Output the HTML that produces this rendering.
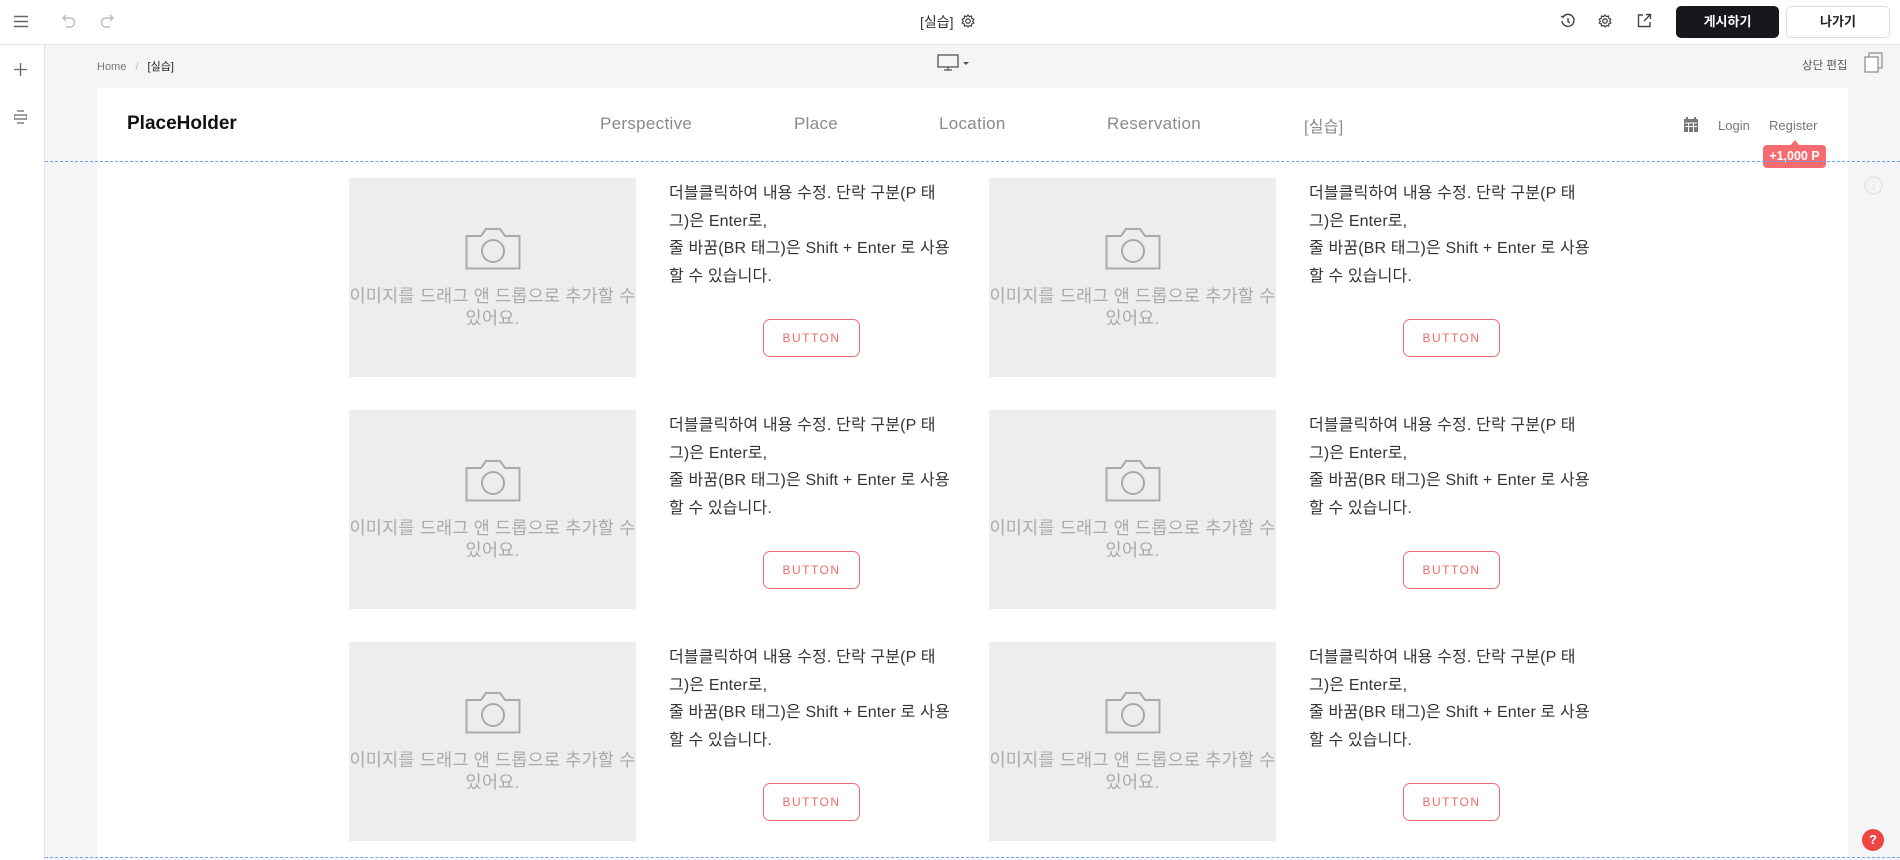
<!DOCTYPE html>
<html><head><meta charset="utf-8"><style>
*{margin:0;padding:0;box-sizing:border-box}
body{width:1900px;height:860px;overflow:hidden;background:#f5f5f7;font-family:"Liberation Sans","Noto Sans CJK KR",sans-serif;position:relative;color:#222}
.abs{position:absolute}
.top{left:0;top:0;width:1900px;height:45px;background:#fff;border-bottom:1px solid #e3e3e6}
.side{left:0;top:45px;width:45px;height:815px;background:#fff;border-right:1px solid #e3e3e6}
.page{left:97px;top:88px;width:1751px;height:772px;background:#fff}
.nav{top:114px;font-size:17px;color:#8a8a8a;letter-spacing:.3px}
.img{width:287px;height:199px;background:#ededed;text-align:center;color:#aaa;font-size:17.5px;line-height:22px;letter-spacing:.2px;white-space:nowrap}
.img svg{display:block;margin:48px auto 15px}
.txt{font-size:16px;line-height:27.5px;color:#333;width:340px;letter-spacing:.15px;white-space:nowrap}
.btn{width:97px;height:38px;border:1px solid #f06b6b;border-radius:7px;color:#f06b6b;font-size:12px;letter-spacing:1.5px;text-align:center;line-height:36px}
.dot{left:45px;width:1855px;height:0;border-top:1px dashed #6aa0f5}
</style></head><body>
<div class="abs top"></div>
<div class="abs side"></div>
<svg class="abs" style="left:14px;top:15px" width="15" height="13"><path d="M0 1.5H14M0 6.5H14M0 11.5H14" stroke="#666" stroke-width="1.6"/></svg>
<svg class="abs" style="left:62px;top:13px" width="14" height="16"><path d="M4 2L1 5L4 8M1 5H8A4.5 4.5 0 0 1 8 14H4" fill="none" stroke="#bbb" stroke-width="1.4"/></svg>
<svg class="abs" style="left:100px;top:13px" width="14" height="16"><path d="M10 2L13 5L10 8M13 5H6A4.5 4.5 0 0 0 6 14H10" fill="none" stroke="#bbb" stroke-width="1.4"/></svg>
<div class="abs" style="left:920px;top:12px;font-size:14px;color:#333">[실습]</div>
<svg class="abs" style="left:961px;top:14px" width="14" height="14" viewBox="0 0 14 14"><circle cx="7" cy="7" r="2.2" fill="none" stroke="#444" stroke-width="1.3"/><path d="M7 1L8.3 2.6L10.5 2L10.8 4.2L12.8 5.3L11.7 7.2L12.8 9L10.8 9.9L10.5 12L8.3 11.5L7 13L5.7 11.5L3.5 12L3.2 9.9L1.2 9L2.3 7.2L1.2 5.3L3.2 4.2L3.5 2L5.7 2.6Z" fill="none" stroke="#444" stroke-width="1.2"/></svg>
<svg class="abs" style="left:1560px;top:13px" width="16" height="16" viewBox="0 0 16 16"><path d="M3 4A6 6 0 1 1 2 8" fill="none" stroke="#444" stroke-width="1.4"/><path d="M1 3L3 4.5L4.5 2.3" fill="none" stroke="#444" stroke-width="1.3"/><path d="M8 5V8.5L10 10" fill="none" stroke="#444" stroke-width="1.4"/></svg>
<svg class="abs" style="left:1598px;top:14px" width="14" height="14" viewBox="0 0 14 14"><circle cx="7" cy="7" r="2.2" fill="none" stroke="#444" stroke-width="1.3"/><path d="M7 1L8.3 2.6L10.5 2L10.8 4.2L12.8 5.3L11.7 7.2L12.8 9L10.8 9.9L10.5 12L8.3 11.5L7 13L5.7 11.5L3.5 12L3.2 9.9L1.2 9L2.3 7.2L1.2 5.3L3.2 4.2L3.5 2L5.7 2.6Z" fill="none" stroke="#444" stroke-width="1.2"/></svg>
<svg class="abs" style="left:1637px;top:13px" width="15" height="15" viewBox="0 0 15 15"><path d="M6 2H1.5V13.5H13V9M9 1.5H13.5V6M13.5 1.5L7 8" fill="none" stroke="#444" stroke-width="1.4"/></svg>
<div class="abs" style="left:1676px;top:6px;width:103px;height:32px;background:#16181d;border-radius:5px;color:#fff;font-size:13px;font-weight:bold;text-align:center;line-height:32px">게시하기</div>
<div class="abs" style="left:1786px;top:6px;width:104px;height:32px;background:#fff;border:1px solid #ddd;border-radius:5px;color:#222;font-size:13px;font-weight:bold;text-align:center;line-height:30px">나가기</div>
<svg class="abs" style="left:14px;top:63px" width="13" height="13"><path d="M6.5 0V13M0 6.5H13" stroke="#666" stroke-width="1.3"/></svg>
<svg class="abs" style="left:14px;top:110px" width="13" height="14"><path d="M3 1H10M0 5H13V9H0ZM3 13H10" fill="none" stroke="#666" stroke-width="1.3"/></svg>
<div class="abs" style="left:97px;top:58px;font-size:11px;color:#777">Home <span style="color:#bbb;margin:0 6px">/</span> <span style="color:#222">[실습]</span></div>
<svg class="abs" style="left:937px;top:54px" width="36" height="17"><rect x="1" y="1" width="20" height="12" fill="none" stroke="#555" stroke-width="1.3"/><path d="M7 16H15M11 13V16" stroke="#555" stroke-width="1.3"/><path d="M26 8L32 8L29 11Z" fill="#555"/></svg>
<div class="abs" style="left:1802px;top:57px;font-size:11.5px;color:#555">상단 편집</div>
<svg class="abs" style="left:1864px;top:52px" width="20" height="22"><rect x="5" y="1" width="13" height="15" fill="none" stroke="#888" stroke-width="1.2"/><rect x="1" y="5" width="13" height="15" fill="#fff" stroke="#888" stroke-width="1.2"/></svg>
<div class="abs page"></div>
<div class="abs" style="left:127px;top:113px;font-size:19px;font-weight:bold;color:#111">PlaceHolder</div>
<div class="abs nav" style="left:600px">Perspective</div>
<div class="abs nav" style="left:794px">Place</div>
<div class="abs nav" style="left:939px">Location</div>
<div class="abs nav" style="left:1107px">Reservation</div>
<div class="abs nav" style="left:1304px;top:113px;font-size:16px">[실습]</div>
<svg class="abs" style="left:1684px;top:117px" width="14" height="15"><rect x="0" y="2" width="14" height="13" fill="#777"/><path d="M3 0V3M11 0V3" stroke="#777" stroke-width="2"/><path d="M1 6H13M1 9.5H13M4.5 6V15M9.5 6V15" stroke="#fff" stroke-width="1"/></svg>
<div class="abs" style="left:1718px;top:118px;font-size:13px;color:#777">Login</div>
<div class="abs" style="left:1769px;top:118px;font-size:13px;color:#777">Register</div>
<div class="abs" style="left:1763px;top:145px;width:63px;height:23px;background:#f56b6f;border-radius:4px;color:#fff;font-size:12.5px;font-weight:bold;text-align:center;line-height:23px">+1,000 P</div>
<div class="abs" style="left:1790px;top:140px;width:0;height:0;border-left:5px solid transparent;border-right:5px solid transparent;border-bottom:6px solid #f56b6f"></div>
<div class="abs dot" style="top:161px"></div>
<div class="abs dot" style="top:857px"></div>
<svg class="abs" style="left:1864px;top:176px" width="19" height="19"><circle cx="9.5" cy="9.5" r="8.5" fill="none" stroke="#e0e0e0" stroke-width="1.2"/><path d="M9.5 8V14M9.5 5V6.3" stroke="#e0e0e0" stroke-width="1.4"/></svg>
<div class="abs" style="left:1862px;top:829px;width:22px;height:22px;border-radius:50%;background:#ef4444;color:#fff;font-size:13px;font-weight:bold;text-align:center;line-height:22px">?</div>
<div id="cards"></div>
<script>
var html='';
var cols=[349,989],rows=[178,410,642];
var cam='<svg width="56" height="44" viewBox="0 0 56 44"><path d="M1.5 10H16L21 3H35L40 10H54.5V42.5H1.5Z" fill="none" stroke="#aaa" stroke-width="2"/><circle cx="28" cy="25" r="11" fill="none" stroke="#aaa" stroke-width="2"/></svg>';
rows.forEach(function(y){cols.forEach(function(x){
html+='<div class="abs img" style="left:'+x+'px;top:'+y+'px">'+cam+'이미지를 드래그 앤 드롭으로 추가할 수<br>있어요.</div>';
html+='<div class="abs txt" style="left:'+(x+320)+'px;top:'+(y+2)+'px">더블클릭하여 내용 수정. 단락 구분(P 태<br>그)은 Enter로,<br>줄 바꿈(BR 태그)은 Shift + Enter 로 사용<br>할 수 있습니다.</div>';
html+='<div class="abs btn" style="left:'+(x+414)+'px;top:'+(y+141)+'px">BUTTON</div>';
});});
document.getElementById('cards').innerHTML=html;
</script>
</body></html>
